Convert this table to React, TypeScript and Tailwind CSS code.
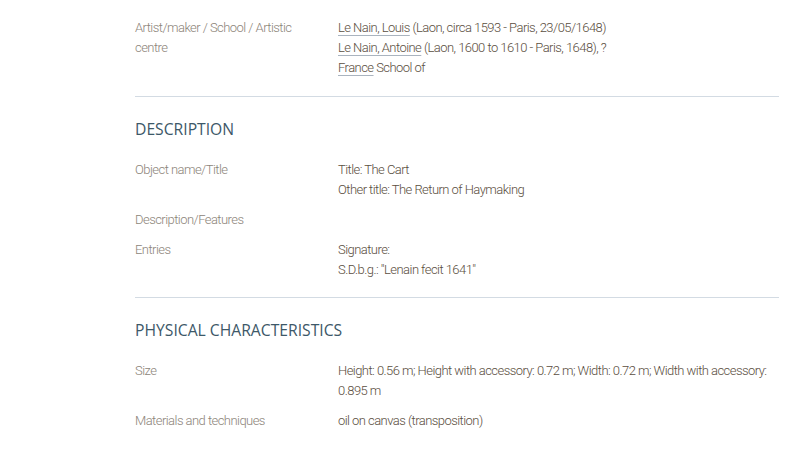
import React from 'react';

type Row = { label: string; lines: React.ReactNode[] };

const Link = ({ children }: { children: React.ReactNode }) => (
  <a className="underline decoration-[#aab4bf] decoration-1 underline-offset-[3px]">{children}</a>
);

function Rows({ rows }: { rows: Row[] }) {
  return (
    <div className="flex flex-col gap-[10px]">
      {rows.map((r) => (
        <div key={r.label} className="grid grid-cols-[203px_1fr]">
          <div className="text-[#8c8479] pr-4">{r.label}</div>
          <div className="text-[#5a4e40]">
            {r.lines.map((l, i) => (
              <div key={i}>{l}</div>
            ))}
          </div>
        </div>
      ))}
    </div>
  );
}

function Section({ title, rows }: { title: string; rows: Row[] }) {
  return (
    <section className="border-t border-[#d3dbe3] pt-[22px] pb-[17px]">
      <h2 className="text-[15.7px] leading-5 font-normal tracking-normal text-[#3d5868] mb-[21px] font-['Open_Sans',sans-serif]">
        {title}
      </h2>
      <Rows rows={rows} />
    </section>
  );
}

export default function App() {
  return (
    <div className="min-h-[453px] bg-white font-['Roboto',sans-serif] font-light text-[13px] leading-5 tracking-[-0.55px]">
      <div className="ml-[135px] w-[644px] pt-[18px]">
        <div className="pb-[18px]">
          <Rows
            rows={[
              {
                label: 'Artist/maker / School / Artistic centre',
                lines: [
                  <><Link>Le Nain, Louis</Link> (Laon, circa 1593 - Paris, 23/05/1648)</>,
                  <><Link>Le Nain, Antoine</Link> (Laon, 1600 to 1610 - Paris, 1648), ?</>,
                  <><Link>France</Link> School of</>,
                ],
              },
            ]}
          />
        </div>
        <Section
          title="DESCRIPTION"
          rows={[
            { label: 'Object name/Title', lines: ['Title: The Cart', 'Other title: The Return of Haymaking'] },
            { label: 'Description/Features', lines: [] },
            { label: 'Entries', lines: ['Signature:', 'S.D.b.g.: "Lenain fecit 1641"'] },
          ]}
        />
        <Section
          title="PHYSICAL CHARACTERISTICS"
          rows={[
            {
              label: 'Size',
              lines: ['Height: 0.56 m; Height with accessory: 0.72 m; Width: 0.72 m; Width with accessory: 0.895 m'],
            },
            { label: 'Materials and techniques', lines: ['oil on canvas (transposition)'] },
          ]}
        />
      </div>
    </div>
  );
}
